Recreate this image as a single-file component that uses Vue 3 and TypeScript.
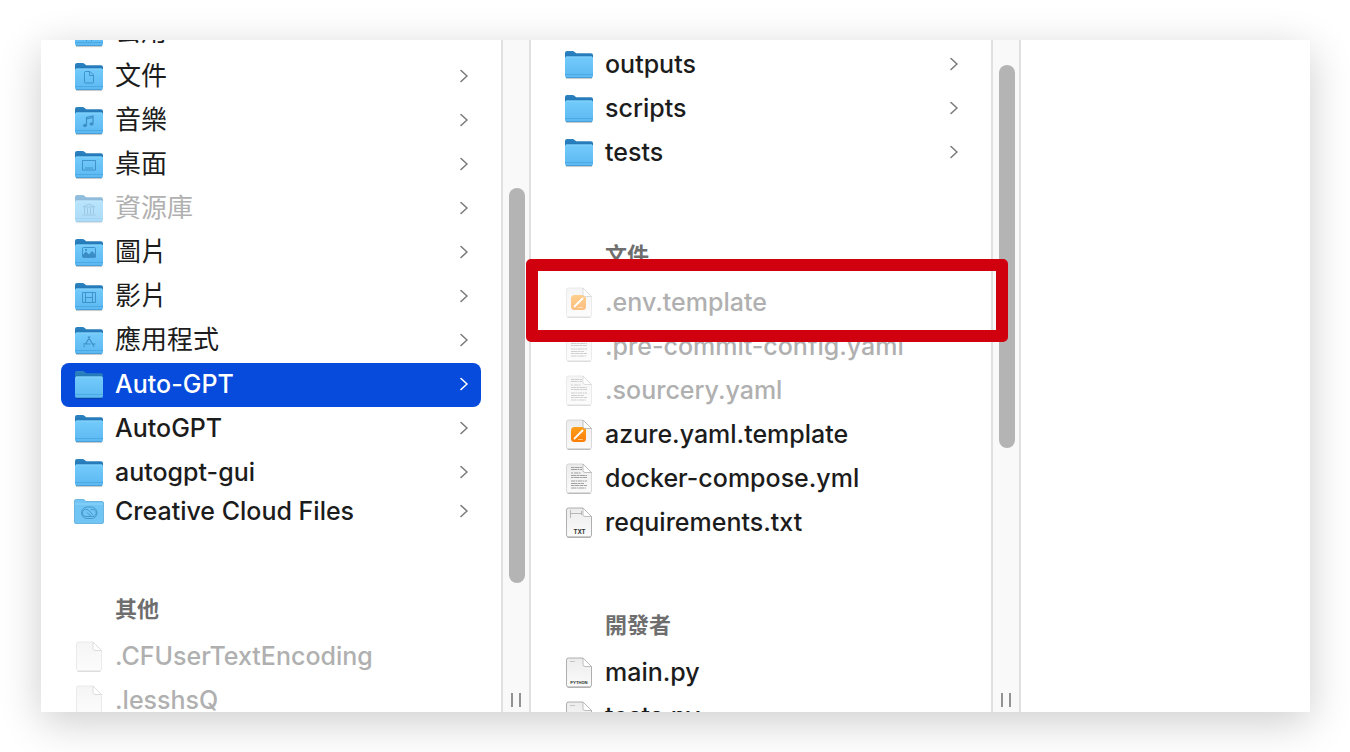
<script setup lang="ts">
type Glyph = '' | 'public' | 'document' | 'music' | 'desktop' | 'library' | 'picture' | 'movie' | 'apps' | 'cloud'
type FileKind = 'blank' | 'pages' | 'text' | 'txt' | 'python'

interface Entry {
  name: string
  folder?: boolean
  glyph?: Glyph
  kind?: FileKind
  dim?: boolean
  selected?: boolean
  marked?: boolean
  compact?: boolean
}

interface Group {
  title?: string
  entries: Entry[]
}

interface Column {
  id: string
  groups: Group[]
}

const columns: Column[] = [
  {
    id: 'home',
    groups: [
      {
        entries: [
          { name: '公用', folder: true, glyph: 'public' },
          { name: '文件', folder: true, glyph: 'document' },
          { name: '音樂', folder: true, glyph: 'music' },
          { name: '桌面', folder: true, glyph: 'desktop' },
          { name: '資源庫', folder: true, glyph: 'library', dim: true },
          { name: '圖片', folder: true, glyph: 'picture' },
          { name: '影片', folder: true, glyph: 'movie' },
          { name: '應用程式', folder: true, glyph: 'apps' },
          { name: 'Auto-GPT', folder: true, selected: true },
          { name: 'AutoGPT', folder: true },
          { name: 'autogpt-gui', folder: true },
          { name: 'Creative Cloud Files', folder: true, glyph: 'cloud', compact: true },
        ],
      },
      {
        title: '其他',
        entries: [
          { name: '.CFUserTextEncoding', kind: 'blank', dim: true },
          { name: '.lesshsQ', kind: 'blank', dim: true },
        ],
      },
    ],
  },
  {
    id: 'project',
    groups: [
      {
        entries: [
          { name: 'outputs', folder: true },
          { name: 'scripts', folder: true },
          { name: 'tests', folder: true },
        ],
      },
      {
        title: '文件',
        entries: [
          { name: '.env.template', kind: 'pages', dim: true, marked: true },
          { name: '.pre-commit-config.yaml', kind: 'text', dim: true },
          { name: '.sourcery.yaml', kind: 'text', dim: true },
          { name: 'azure.yaml.template', kind: 'pages' },
          { name: 'docker-compose.yml', kind: 'text' },
          { name: 'requirements.txt', kind: 'txt' },
        ],
      },
      {
        title: '開發者',
        entries: [
          { name: 'main.py', kind: 'python' },
          { name: 'tests.py', kind: 'python' },
        ],
      },
    ],
  },
]

const isHan = (name: string): boolean => /\p{Script=Han}/u.test(name)
</script>

<template>
  <main class="window">
    <svg class="defs" aria-hidden="true">
      <defs>
        <linearGradient id="folder-front" x1="0" y1="0" x2="0" y2="1">
          <stop offset="0" stop-color="#74cbfb" />
          <stop offset="1" stop-color="#5bb8f2" />
        </linearGradient>
        <linearGradient id="folder-back" x1="0" y1="0" x2="0" y2="1">
          <stop offset="0" stop-color="#2c83c1" />
          <stop offset="1" stop-color="#1766a6" />
        </linearGradient>
        <linearGradient id="paper" x1="0" y1="0" x2="0" y2="1">
          <stop offset="0" stop-color="#ececec" />
          <stop offset="1" stop-color="#fbfbfb" />
        </linearGradient>
        <linearGradient id="orange" x1="0" y1="0" x2="0" y2="1">
          <stop offset="0" stop-color="#ff9f1c" />
          <stop offset="1" stop-color="#fb7d05" />
        </linearGradient>
      </defs>
    </svg>

    <template v-for="column in columns" :key="column.id">
      <nav class="column" :class="column.id">
        <section v-for="(group, g) in column.groups" :key="g" class="group">
          <h2 v-if="group.title" class="title">{{ group.title }}</h2>
          <ul class="list">
            <li v-for="entry in group.entries" :key="entry.name" class="item" :class="{ marked: entry.marked }">
              <button
                type="button"
                class="row"
                :class="{ dim: entry.dim, selected: entry.selected, compact: entry.compact }"
              >
                <svg v-if="entry.glyph === 'cloud'" class="icon" viewBox="0 0 32 32" aria-hidden="true">
                  <path d="M1.500 5q0-1.500 1.500-1.500h7q1 0 2 1l1 1h16q1.500 0 1.500 1.500v19q0 1.500-1.500 1.500h-26q-1.500 0-1.500-1.500z" fill="#70c5f4" stroke="#5aaadb" stroke-width=".8" />
                  <path d="M2 8h28" stroke="#9bdcfc" stroke-width=".8" />
                  <g fill="none" stroke="#3f93c8" stroke-width=".9">
                    <rect x="8.500" y="11" width="15.500" height="11.500" rx="5.700" />
                    <path d="M18 20.500h-5a3.600 3.600 0 1 1 2.500-6.200l4.500 4.700" />
                    <path d="M14 16.500l2.500 2.500q1.500 1.500 3.300 1.500a3.600 3.600 0 1 0-2.300-6.500" />
                  </g>
                </svg>
                <svg v-else-if="entry.folder" class="icon" viewBox="0 0 32 32" aria-hidden="true">
                  <path d="M3 29.600h26" stroke="#000" stroke-opacity=".2" />
                  <path d="M2 4q0-2 2-2h5.500q1.200 0 2.200 1l1.500 1.300h14.800q2 0 2 2v10h-28z" fill="url(#folder-back)" />
                  <path d="M2 9q0-1.500 1.500-1.500h25q1.500 0 1.500 1.500v18q0 2-2 2h-24q-2 0-2-2z" fill="url(#folder-front)" />
                  <path d="M3 8h26" stroke="#8ad6fd" stroke-width=".8" />
                  <path d="M2 25.500h28" stroke="#48a5e0" stroke-width=".8" />
                  <path d="M3 28.600h26" stroke="#4596ca" stroke-width=".8" />
                  <g fill="none" stroke="#3b8dc6" stroke-width=".9">
                    <path v-if="entry.glyph === 'public'" d="M11 13l5 3 5-3M16 16v5l-3 3M16 21l3 3M16 11v2" />
                    <path v-else-if="entry.glyph === 'document'" d="M11.500 11.500q0-1 1-1h4.500l3.500 3.500v7q0 1-1 1h-7q-1 0-1-1zM16.500 10.500v4h4" />
                    <g v-else-if="entry.glyph === 'music'">
                      <path d="M13.500 20v-7.500l6.500-1.500v7.500M13.500 14l6.500-1.500" stroke-width="1.200" />
                      <ellipse cx="12" cy="20.500" rx="1.600" ry="1.200" fill="#3b8dc6" />
                      <ellipse cx="18.500" cy="19" rx="1.600" ry="1.200" fill="#3b8dc6" />
                    </g>
                    <path v-else-if="entry.glyph === 'desktop'" d="M9.500 11.500h13v9.500h-13zM12 19h8" />
                    <path v-else-if="entry.glyph === 'library'" d="M10 14l6-3 6 3zM11.500 15v6M14.500 15v6M17.500 15v6M20.500 15v6M9.500 22h13" />
                    <g v-else-if="entry.glyph === 'picture'">
                      <rect x="9.500" y="10.500" width="13" height="10" rx="1" />
                      <path d="M10 20v-2l3-3 3 3 3-3.500 3.500 3.500v2z" fill="#3b8dc6" />
                      <circle cx="13" cy="13" r=".7" fill="#3b8dc6" />
                    </g>
                    <path v-else-if="entry.glyph === 'movie'" d="M9.500 11.500h13v10h-13zM12.500 11.500v10M19.500 11.500v10M12.500 16.500h7" />
                    <path v-else-if="entry.glyph === 'apps'" d="M15 11.500l4.500 7.500 1.500 2.500M17 11.500l-4.500 7.500M10 19h7.500M19.500 19h3M11.500 20.500l-.8 1.500" stroke-width="1.200" />
                  </g>
                </svg>
                <svg v-else class="icon" :class="entry.kind" viewBox="0 0 32 32" aria-hidden="true">
                  <path class="sheet" d="M3.500 3q0-2 2-2h14.500l8.500 8.500v18.500q0 2-2 2h-21q-2 0-2-2z" fill="url(#paper)" />
                  <path d="M4.500 30.300h23" stroke="#888" stroke-opacity=".6" />
                  <g v-if="entry.kind === 'pages'">
                    <rect x="8" y="8" width="15" height="15" rx="3.500" fill="url(#orange)" />
                    <path d="M11.500 19.500l8-8" stroke="#fff" stroke-width="1.800" stroke-linecap="round" />
                    <path d="M15 20.500h5" stroke="#ffd29d" stroke-width=".8" />
                  </g>
                  <g v-else-if="entry.kind === 'text'" fill="none" stroke="#a0a0a0" stroke-width="1.200">
                    <path d="M8 4.500h11" stroke-dasharray="3 .5 5 .5" />
                    <path d="M8 6.500h11" stroke-dasharray="6 .5 2 .5" />
                    <path d="M8 10h10" stroke-dasharray="2 1 4 .5" />
                    <path d="M8 12.500h16" stroke-dasharray="5 .5 3 .5" />
                    <path d="M8 14.500h16" stroke-dasharray="2 .5 6 .5" />
                    <path d="M8 18h16" stroke-dasharray="4 .5 2 .5" />
                    <path d="M8 20.500h13" stroke-dasharray="6 .5 3 .5" />
                    <path d="M8 22.500h16" stroke-dasharray="3 .5 5 .5" />
                    <path d="M8 25h15" stroke-dasharray="5 .5 2 .5" />
                  </g>
                  <g v-else-if="entry.kind === 'txt'">
                    <path d="M7.500 3v8M7.500 6.500h11M18.500 4v4" fill="none" stroke="#aaa" stroke-width=".8" />
                    <text x="16.500" y="27" class="tag">TXT</text>
                  </g>
                  <g v-else-if="entry.kind === 'python'">
                    <path d="M7 4.500h5" stroke="#bbb" stroke-width=".8" />
                    <text x="16" y="26.500" class="tag small">PYTHON</text>
                  </g>
                  <path d="M20 1v6.500q0 2 2 2h6.500z" fill="#fff" stroke="#b0b0b0" stroke-width=".8" />
                </svg>
                <span class="name" :class="{ han: isHan(entry.name) }">{{ entry.name }}</span>
                <svg v-if="entry.folder" class="chevron" viewBox="0 0 8 14" aria-hidden="true">
                  <path d="M1 1.500l6 5.500-6 5.500" />
                </svg>
              </button>
            </li>
          </ul>
        </section>
      </nav>
      <div class="track" :class="column.id">
        <div class="thumb"></div>
        <div class="grip"></div>
      </div>
    </template>
  </main>
</template>

<style scoped>
.window {
  display: flex;
  height: calc(100vh - 80px);
  margin: 40px 40px 40px 41px;
  overflow: hidden;
  background: #fff;
  box-shadow: 0 10px 40px rgba(0, 0, 0, 0.2);
  color: #1c1c1c;
  font-family: Inter, 'Noto Sans CJK TC', sans-serif;
}

.defs {
  position: absolute;
  width: 0;
  height: 0;
}

.column {
  flex: 0 1 460px;
  box-sizing: border-box;
  min-width: 0;
  padding: 0 20px;
}

.column.home {
  margin-top: -29px;
}

.column.project {
  margin-top: 3px;
}

.group + .group {
  padding-top: 54px;
}

.title {
  margin: 0;
  padding-left: 54px;
  color: #6e6e6e;
  font-size: 22px;
  font-weight: 700;
  line-height: 52px;
}

.list {
  margin: 0;
  padding: 0;
  list-style: none;
}

.item.marked {
  position: relative;
  z-index: 1;
}

.item.marked::before {
  position: absolute;
  inset: -22px -37px -17px -25px;
  border: 12px solid #d0000e;
  border-radius: 5px;
  content: '';
}

.row {
  position: relative;
  display: flex;
  align-items: center;
  gap: 10px;
  width: 100%;
  height: 44px;
  padding: 0 13px 0 12px;
  border: 0;
  border-radius: 8px;
  background: transparent;
  color: inherit;
  font-family: inherit;
  font-size: 25px;
  font-weight: 500;
  line-height: 40px;
  text-align: left;
}

.row.compact {
  height: 34px;
}

.row.selected {
  background: #064bdb;
  color: #fff;
}

.row.dim .name {
  color: #b0b0b0;
}

.row.dim .icon {
  opacity: 0.5;
}

.icon {
  flex: none;
  width: 32px;
  height: 32px;
}

.sheet {
  stroke: #cfcfcf;
  stroke-width: 0.8;
}

.txt .sheet,
.python .sheet {
  stroke: #9c9c9c;
}

.name {
  flex: 1;
  padding-bottom: 2px;
  white-space: nowrap;
}

.name.han {
  font-size: 26px;
  font-weight: 400;
}

.tag {
  fill: #333;
  font-family: Inter, sans-serif;
  font-size: 6px;
  font-weight: 700;
  text-anchor: middle;
}

.tag.small {
  font-size: 4px;
}

.chevron {
  flex: none;
  width: 8px;
  height: 14px;
  margin-bottom: 2px;
  fill: none;
  stroke: #7c7c7c;
  stroke-width: 1.6;
  stroke-linecap: round;
  stroke-linejoin: round;
}

.selected .chevron {
  stroke: #fff;
}

.track {
  display: flex;
  flex: 0 0 30px;
  flex-direction: column;
  justify-content: space-between;
  box-sizing: border-box;
  padding: 0 4px 5px 6px;
  border: solid #e0e0e0;
  border-width: 0 2px;
  background: #f9f9f9;
}

.thumb {
  width: 16px;
  border-radius: 8px;
  background: #b4b4b4;
}

.track.home .thumb {
  height: 395px;
  margin-top: 148px;
}

.track.project .thumb {
  height: 383px;
  margin-top: 25px;
}

.grip {
  width: 6px;
  height: 14px;
  margin-left: 2px;
  border: solid #929292;
  border-width: 0 2px;
}
</style>

<style>
body {
  background: #fff;
  overflow: hidden;
}
</style>
